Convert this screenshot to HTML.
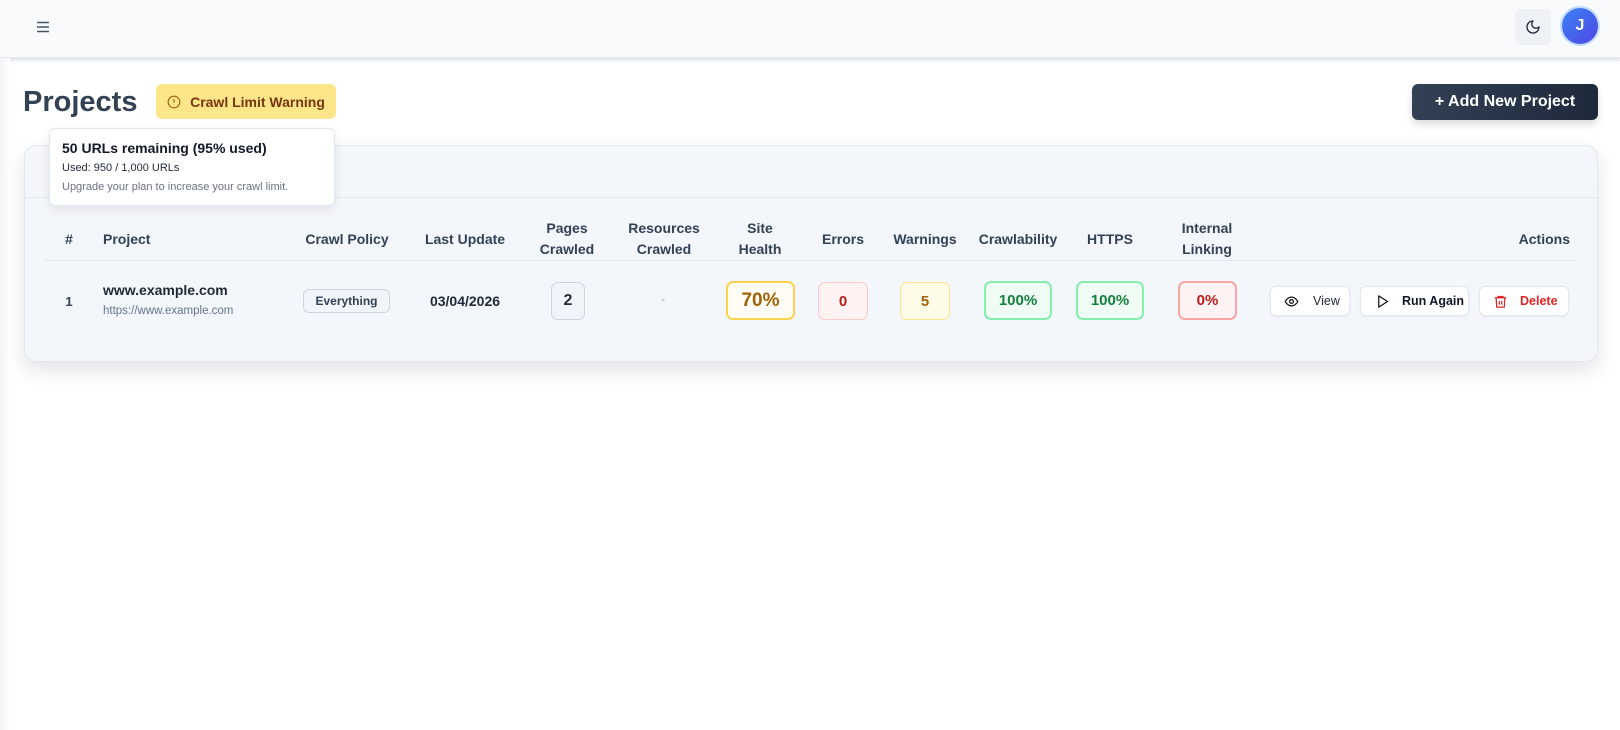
<!DOCTYPE html>
<html><head><meta charset="utf-8"><style>
*{box-sizing:border-box;margin:0;padding:0}
body{width:1620px;height:730px;overflow:hidden;background:#fff;font-family:"Liberation Sans",sans-serif;color:#334155;position:relative}
.a{position:absolute}
.hdr{left:0;top:0;width:1620px;height:58px;background:#f8fafc;box-shadow:0 2px 4px rgba(100,116,139,.25);border-bottom:1px solid #e2e8f0}
.lg{left:0;top:58px;width:10px;height:672px;background:linear-gradient(90deg,#f3f4f6,#fff)}
.th{font-weight:bold;font-size:14px;color:#334155;text-align:center;line-height:21px;transform:translateX(-50%);white-space:nowrap}
.bx{border-radius:7px;display:flex;align-items:center;justify-content:center;font-weight:bold;white-space:nowrap}
.btn{background:#fff;border:1px solid #e2e8f0;border-radius:6px;display:flex;align-items:center;font-size:12.5px;font-weight:bold;color:#111827;box-shadow:0 1px 2px rgba(0,0,0,.05);white-space:nowrap}
</style></head><body>
<div class="a hdr"></div>
<div class="a lg"></div>
<svg class="a" style="left:36px;top:20px" width="14" height="14" viewBox="0 0 14 14" fill="none" stroke="#475569" stroke-width="1.4"><path d="M1 2.5h12M1 7h12M1 11.5h12"/></svg>
<div class="a" style="left:1515px;top:9px;width:36px;height:36px;background:#eef1f5;border-radius:6px"></div>
<svg class="a" style="left:1525px;top:19px" width="16" height="16" viewBox="0 0 24 24" fill="none" stroke="#1f2937" stroke-width="2" stroke-linecap="round" stroke-linejoin="round"><path d="M12 3a6 6 0 0 0 9 9 9 9 0 1 1-9-9Z"/></svg>
<div class="a" style="left:1562px;top:8px;width:36px;height:36px;border-radius:50%;background:linear-gradient(135deg,#3b82f6,#4f46e5);box-shadow:0 0 0 2px #bfdbfe;color:#fff;font-weight:bold;font-size:16px;display:flex;align-items:center;justify-content:center">J</div>

<div class="a" style="left:23px;top:84px;font-size:29px;font-weight:bold;color:#334155;line-height:36px">Projects</div>
<div class="a bx" style="left:156px;top:84px;width:180px;height:35px;background:#fde68a;border-radius:6px;color:#78350f;font-size:14px;gap:9px">
<svg width="14" height="14" viewBox="0 0 24 24" fill="none" stroke="#a16207" stroke-width="2"><circle cx="12" cy="12" r="10"/><path d="M12 7v6M12 16.5v.5"/></svg>Crawl Limit Warning</div>
<div class="a bx" style="left:1412px;top:84px;width:186px;height:36px;background:linear-gradient(90deg,#334155,#1e293b);color:#fff;font-size:16px;border-radius:6px;box-shadow:0 4px 8px rgba(0,0,0,.15)">+ Add New Project</div>

<div class="a" style="left:24px;top:145px;width:1574px;height:217px;background:#f3f6fa;border:1px solid #e2e8f0;border-radius:12px;box-shadow:0 8px 20px rgba(15,23,42,.12)"></div>
<div class="a" style="left:25px;top:197px;width:1572px;height:1px;background:#e2e8f0"></div>
<div class="a" style="left:44px;top:260px;width:1534px;height:1px;background:#e2e8f0"></div>

<div class="a th" style="left:69px;top:229px">#</div>
<div class="a" style="left:103px;top:229px;font-weight:bold;font-size:14px;line-height:21px">Project</div>
<div class="a th" style="left:347px;top:229px">Crawl Policy</div>
<div class="a th" style="left:465px;top:229px">Last Update</div>
<div class="a th" style="left:567px;top:218px">Pages<br>Crawled</div>
<div class="a th" style="left:664px;top:218px">Resources<br>Crawled</div>
<div class="a th" style="left:760px;top:218px">Site<br>Health</div>
<div class="a th" style="left:843px;top:229px">Errors</div>
<div class="a th" style="left:925px;top:229px">Warnings</div>
<div class="a th" style="left:1018px;top:229px">Crawlability</div>
<div class="a th" style="left:1110px;top:229px">HTTPS</div>
<div class="a th" style="left:1207px;top:218px">Internal<br>Linking</div>
<div class="a" style="right:50px;top:229px;font-weight:bold;font-size:14px;line-height:21px">Actions</div>

<div class="a th" style="left:69px;top:291px;font-size:13px">1</div>
<div class="a" style="left:103px;top:282px;font-weight:bold;font-size:14px;color:#1f2937">www.example.com</div>
<div class="a" style="left:103px;top:305px;font-size:11.5px;color:#64748b">https://www.example.com</div>
<div class="a bx" style="left:303px;top:289px;width:87px;height:24px;border:1px solid #cbd5e1;background:#f1f5f9;font-size:12px;color:#334155;border-radius:6px">Everything</div>
<div class="a th" style="left:465px;top:291px;font-size:14px;color:#1f2937">03/04/2026</div>
<div class="a bx" style="left:551px;top:282px;width:34px;height:38px;border:1px solid #cbd5e1;background:#f1f5f9;font-size:16px;color:#1e293b">2</div>
<div class="a" style="left:661px;top:292px;color:#94a3b8;font-size:12px">-</div>
<div class="a bx" style="left:726px;top:281px;width:69px;height:39px;border:2px solid #fcd34d;background:#fffdf5;color:#a16207;font-size:19px">70%</div>
<div class="a bx" style="left:818px;top:282px;width:50px;height:38px;border:1px solid #fecaca;background:#fef2f2;color:#b91c1c;font-size:15px">0</div>
<div class="a bx" style="left:900px;top:282px;width:50px;height:38px;border:1px solid #fde68a;background:#fefce8;color:#a16207;font-size:15px">5</div>
<div class="a bx" style="left:984px;top:281px;width:68px;height:39px;border:2px solid #86efac;background:#f0fdf4;color:#15803d;font-size:15px">100%</div>
<div class="a bx" style="left:1076px;top:281px;width:68px;height:39px;border:2px solid #86efac;background:#f0fdf4;color:#15803d;font-size:15px">100%</div>
<div class="a bx" style="left:1178px;top:281px;width:59px;height:39px;border:2px solid #fca5a5;background:#fef2f2;color:#b91c1c;font-size:15px">0%</div>

<div class="a btn" style="left:1270px;top:286px;width:80px;height:30px;padding-left:13px;gap:14px;font-weight:normal;color:#1f2937">
<svg width="15" height="15" viewBox="0 0 24 24" fill="none" stroke="#111" stroke-width="2"><path d="M2 12s3.5-7 10-7 10 7 10 7-3.5 7-10 7S2 12 2 12Z"/><circle cx="12" cy="12" r="3"/></svg>View</div>
<div class="a btn" style="left:1360px;top:286px;width:109px;height:30px;padding-left:14px;gap:12px">
<svg width="15" height="15" viewBox="0 0 24 24" fill="none" stroke="#111" stroke-width="2" stroke-linejoin="round"><path d="M6 3l14 9-14 9Z"/></svg>Run Again</div>
<div class="a btn" style="left:1479px;top:286px;width:90px;height:30px;padding-left:13px;gap:12px;color:#dc2626">
<svg width="15" height="15" viewBox="0 0 24 24" fill="none" stroke="#dc2626" stroke-width="2"><path d="M3 6h18M8 6V4h8v2M5 6l1 15h12l1-15M10 11v6M14 11v6"/></svg>Delete</div>

<div class="a" style="left:49px;top:128px;width:286px;height:78px;background:#fff;border:1px solid #e2e8f0;border-radius:6px;box-shadow:0 4px 10px rgba(0,0,0,.08);padding:9px 12px">
<div style="font-weight:bold;font-size:14px;color:#111827;line-height:20px">50 URLs remaining (95% used)</div>
<div style="font-size:11px;color:#1f2937;margin-top:4px">Used: 950 / 1,000 URLs</div>
<div style="font-size:11px;color:#6b7280;margin-top:7px">Upgrade your plan to increase your crawl limit.</div>
</div>
</body></html>
